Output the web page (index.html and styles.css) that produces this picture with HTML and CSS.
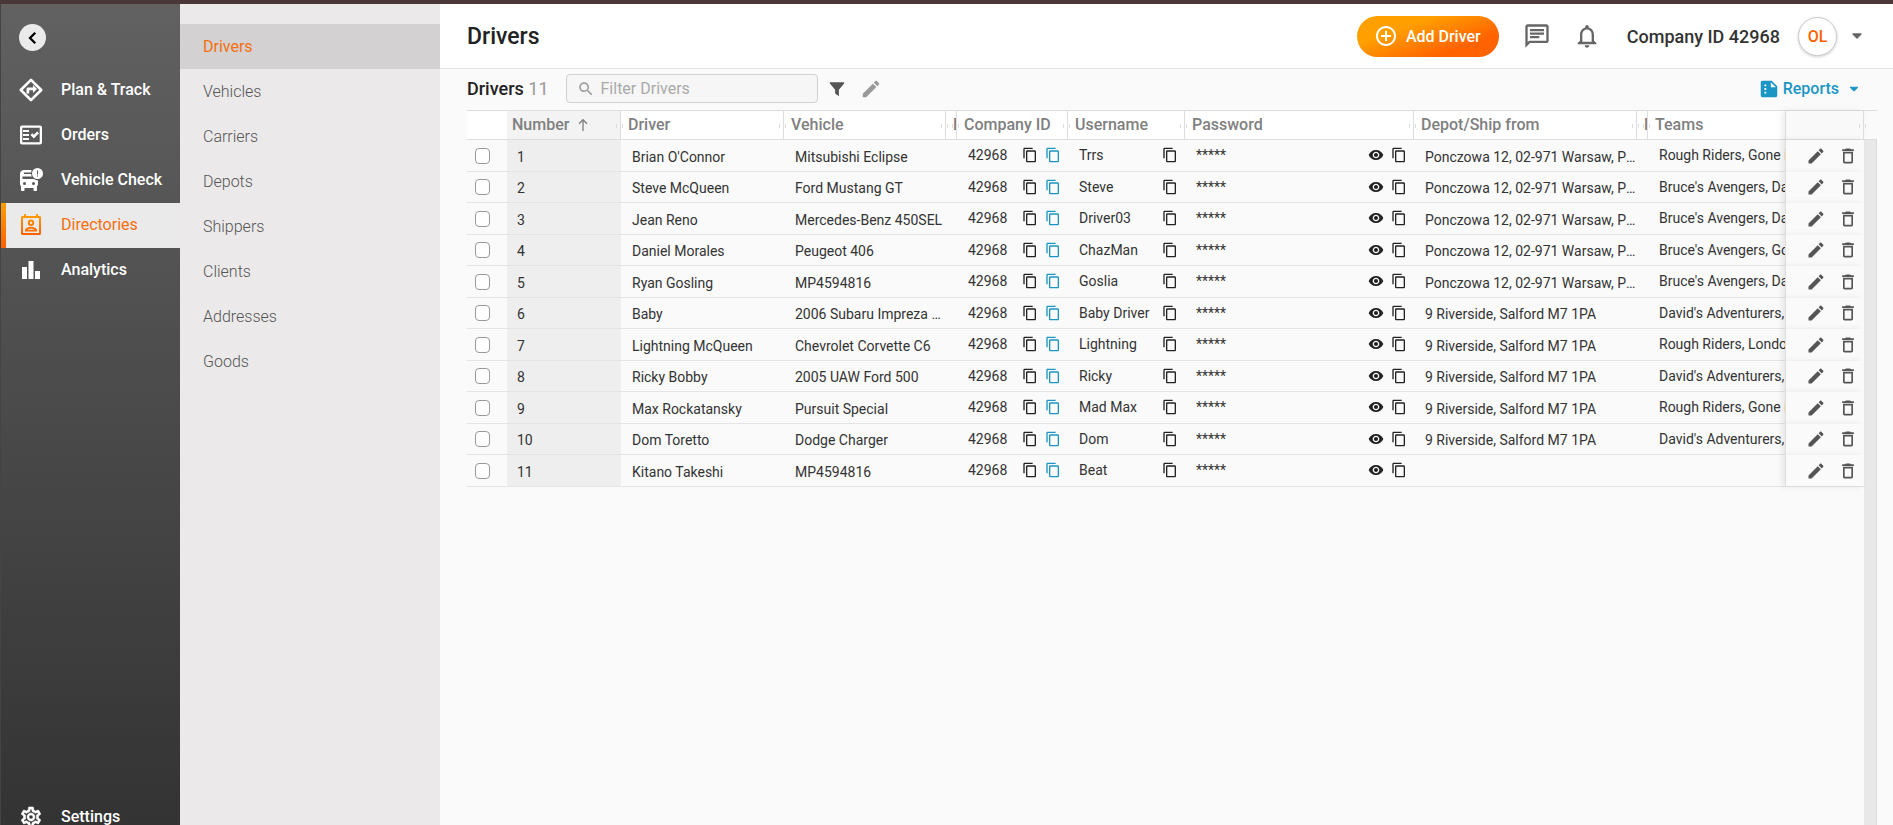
FILE: index.html
```html
<!DOCTYPE html>
<html lang="en">
<head>
    <meta charset="UTF-8">
    <meta name="viewport" content="width=device-width, initial-scale=1.0">
    <title>Drivers</title>
    <link rel="stylesheet" href="styles.css">
</head>
<body>
    <!-- Icon set -->
    <svg class="sprite" aria-hidden="true">
        <linearGradient id="orange" x1="0" y1="0" x2="0" y2="1">
            <stop offset="0" stop-color="#ffa000"/>
            <stop offset="1" stop-color="#ff5f00"/>
        </linearGradient>
        <symbol id="i-back" viewBox="0 0 24 24"><path d="M15 5l-7 7 7 7" fill="none" stroke="currentColor" stroke-width="3"/></symbol>
        <symbol id="i-plan" viewBox="0 0 24 24"><path d="M12 1.800L1.800 12 12 22.200 22.200 12z" fill="none" stroke="currentColor" stroke-width="2.6" stroke-linejoin="round"/><path d="M7.500 15.500V11c0-.8.700-1.500 1.500-1.500h5V7l4 4-4 4v-2.800h-3.800v3.300z"/></symbol>
        <symbol id="i-orders" viewBox="0 0 24 24"><path fill-rule="evenodd" d="M21 2.500H3C1.900 2.500 1 3.400 1 4.500v15c0 1.100.9 2 2 2h18c1.100 0 2-.9 2-2v-15c0-1.100-.9-2-2-2zm-.3 16.700H3.300V4.800h17.400v14.400z"/><path d="M20 10.200L18.200 8.400l-3.400 3.400-1.500-1.500-1.800 1.800 3.300 3.300zM4 7h6v2H4zM4 11h6v2H4zM4 15h6v2H4z"/></symbol>
        <symbol id="i-check" viewBox="0 0 24 24"><path fill-rule="evenodd" d="M12.500 2H5.500C2.500 2 1 3.500 1 6v10c0 1 .4 1.700 1 2.200V22c0 .6.4 1 1 1h1.500c.6 0 1-.4 1-1v-2h9v2c0 .6.4 1 1 1H17c.6 0 1-.4 1-1v-3.800c.6-.5 1-1.200 1-2.200v-3.600a6 6 0 0 1-4-1.400H3.500V8.500h9.300a6 6 0 0 1-.6-2.500H5V4.500h7.300c0-.9.100-1.700.200-2.500zM5.500 14a1.500 1.500 0 1 1 0 3 1.500 1.500 0 0 1 0-3zm9 0a1.500 1.500 0 1 1 0 3 1.500 1.500 0 0 1 0-3z"/><path fill-rule="evenodd" d="M18.500 0a5.500 5.500 0 1 1 0 11 5.500 5.500 0 0 1 0-11zM18 2.500v4h1v-4zm0 5v1h1v-1z"/></symbol>
        <symbol id="i-directories" viewBox="0 0 24 24"><path fill="url(#orange)" fill-rule="evenodd" d="M20.500 3H19V1h-2v2H7V1H5v2H3.500C2.700 3 2 3.700 2 4.500v16c0 .8.7 1.500 1.500 1.500h17c.8 0 1.500-.7 1.500-1.500v-16c0-.8-.7-1.500-1.500-1.500zM20 20H4V5h16v15zM12 6.500a3.200 3.200 0 1 1 0 6.400 3.200 3.200 0 0 1 0-6.400zm0 2a1.200 1.200 0 1 0 0 2.400 1.200 1.200 0 0 0 0-2.400zM6 18.500v-1.300c0-2.200 4-3.400 6-3.400s6 1.200 6 3.400v1.300H6zm2.600-1.800h6.800c-.8-.6-2.300-1-3.400-1s-2.600.4-3.400 1z"/></symbol>
        <symbol id="i-analytics" viewBox="0 0 24 24"><path d="M3 9h5v12H3zM9.500 3h5v18h-5zM16 13h5v8h-5z"/></symbol>
        <symbol id="i-settings" viewBox="0 0 24 24"><path stroke="currentColor" stroke-width=".6" fill-rule="evenodd" d="M19.430 12.980c.04-.32.07-.64.07-.98 0-.34-.03-.66-.07-.98l2.110-1.650c.19-.15.24-.42.12-.64l-2-3.460c-.09-.16-.26-.25-.44-.25-.06 0-.12.010-.17.030l-2.490 1c-.52-.4-1.080-.73-1.690-.98l-.38-2.650C14.460 2.180 14.250 2 14 2h-4c-.25 0-.46.18-.49.42l-.38 2.650c-.61.25-1.170.59-1.690.98l-2.490-1c-.06-.02-.12-.03-.18-.03-.17 0-.34.09-.43.25l-2 3.460c-.13.22-.07.49.12.64l2.110 1.650c-.04.32-.07.65-.07.98 0 .33.03.66.07.98l-2.110 1.650c-.19.15-.24.42-.12.64l2 3.460c.09.16.26.25.44.25.06 0 .12-.01.17-.03l2.490-1c.52.4 1.080.73 1.690.98l.38 2.650c.03.24.24.42.49.42h4c.25 0 .46-.18.49-.42l.38-2.650c.61-.25 1.170-.59 1.690-.98l2.490 1c.06.02.12.03.18.03.17 0 .34-.09.43-.25l2-3.460c.12-.22.07-.49-.12-.64l-2.110-1.650zm-1.980-1.710c.04.31.05.52.05.73 0 .21-.02.43-.05.73l-.14 1.130.89.7 1.080.84-.7 1.210-1.270-.51-1.040-.42-.9.68c-.43.32-.84.56-1.250.73l-1.060.43-.16 1.130-.2 1.350h-1.400l-.19-1.350-.16-1.130-1.060-.43c-.43-.18-.83-.41-1.230-.71l-.91-.7-1.060.43-1.270.51-.7-1.210 1.080-.84.89-.7-.14-1.130c-.03-.31-.05-.54-.05-.74s.02-.43.05-.73l.14-1.130-.89-.7-1.080-.84.7-1.210 1.270.51 1.040.42.9-.68c.43-.32.84-.56 1.250-.73l1.060-.43.16-1.130.2-1.350h1.390l.19 1.350.16 1.130 1.060.43c.43.18.83.41 1.230.71l.91.7 1.060-.43 1.270-.51.7 1.210-1.070.85-.89.7.14 1.130zM12 8c-2.210 0-4 1.790-4 4s1.790 4 4 4 4-1.790 4-4-1.790-4-4-4zm0 6c-1.100 0-2-.9-2-2s.9-2 2-2 2 .9 2 2-.9 2-2 2z"/></symbol>
        <symbol id="i-add" viewBox="0 0 24 24"><path d="M13 7h-2v4H7v2h4v4h2v-4h4v-2h-4V7zm-1-5C6.480 2 2 6.480 2 12s4.480 10 10 10 10-4.480 10-10S17.520 2 12 2zm0 18c-4.410 0-8-3.590-8-8s3.590-8 8-8 8 3.590 8 8-3.590 8-8 8z"/></symbol>
        <symbol id="i-chat" viewBox="0 0 24 24"><path d="M4 4h16v12H5.170L4 17.170V4m0-2c-1.100 0-1.990.9-1.990 2L2 22l4-4h14c1.100 0 2-.9 2-2V4c0-1.100-.9-2-2-2H4zm2 10h8v2H6v-2zm0-3h12v2H6V9zm0-3h12v2H6V6z"/></symbol>
        <symbol id="i-bell" viewBox="0 0 24 24"><path d="M12 22c1.100 0 2-.9 2-2h-4c0 1.100.9 2 2 2zm6-6v-5c0-3.070-1.630-5.640-4.500-6.320V4c0-.83-.67-1.500-1.500-1.500s-1.500.67-1.500 1.500v.68C7.640 5.360 6 7.920 6 11v5l-2 2v1h16v-1l-2-2zm-2 1H8v-6c0-2.480 1.510-4.500 4-4.500s4 2.020 4 4.500v6z"/></symbol>
        <symbol id="i-caret" viewBox="0 0 24 24"><path d="M6 9h12l-6 6z" stroke="currentColor" stroke-linejoin="round" stroke-width="2"/></symbol>
        <symbol id="i-search" viewBox="0 0 24 24"><path d="M15.500 14h-.79l-.28-.27C15.410 12.590 16 11.110 16 9.500 16 5.910 13.090 3 9.500 3S3 5.910 3 9.500 5.910 16 9.500 16c1.610 0 3.090-.59 4.230-1.570l.27.28v.79l5 4.990L20.490 19l-4.990-5zm-6 0C7.010 14 5 11.990 5 9.500S7.010 5 9.500 5 14 7.010 14 9.500 11.990 14 9.500 14z"/></symbol>
        <symbol id="i-filter" viewBox="0 0 24 24"><path d="M2.500 3h19v1.500L14.500 13v8.500L9.500 18v-5l-7-8.500z"/></symbol>
        <symbol id="i-edit" viewBox="0 0 24 24"><path d="M3 17.250V21h3.750L17.810 9.940l-3.750-3.750L3 17.250zM20.710 7.040c.39-.39.39-1.020 0-1.410l-2.340-2.340c-.39-.39-1.020-.39-1.410 0l-1.830 1.830 3.750 3.750 1.830-1.830z"/></symbol>
        <symbol id="i-report" viewBox="0 0 24 24"><path fill-rule="evenodd" d="M15 3H5c-1.100 0-2 .9-2 2v14c0 1.100.9 2 2 2h14c1.100 0 2-.9 2-2V9l-6-6zM7 7h2v2H7zM7 11h2v2H7zM7 15h2v2H7zM14 4.500l5.500 5.500H14z"/></symbol>
        <symbol id="i-sort" viewBox="0 0 24 24"><path d="M12 21V4M6 10l6-6 6 6" fill="none" stroke="currentColor" stroke-width="2"/></symbol>
        <symbol id="i-copy" viewBox="0 0 24 24"><path d="M16 1H4c-1.100 0-2 .9-2 2v14h2V3h12V1zm3 4H8c-1.100 0-2 .9-2 2v14c0 1.100.9 2 2 2h11c1.100 0 2-.9 2-2V7c0-1.100-.9-2-2-2zm0 16H8V7h11v14z"/></symbol>
        <symbol id="i-eye" viewBox="0 0 24 24"><path d="M12 4.500C7 4.500 2.730 7.610 1 12c1.730 4.390 6 7.500 11 7.500s9.270-3.110 11-7.500c-1.730-4.390-6-7.500-11-7.500zM12 17c-2.760 0-5-2.240-5-5s2.240-5 5-5 5 2.240 5 5-2.240 5-5 5zm0-8c-1.660 0-3 1.340-3 3s1.340 3 3 3 3-1.340 3-3-1.340-3-3-3z"/></symbol>
        <symbol id="i-delete" viewBox="0 0 24 24"><path fill-rule="evenodd" d="M6 19c0 1.100.9 2 2 2h8c1.100 0 2-.9 2-2V7H6v12zM8 9h8v10H8V9zm7.500-5l-1-1h-5l-1 1H5v2h14V4z"/></symbol>
    </svg>

    <div class="app">
        <!-- Main menu -->
        <nav class="sidebar">
            <button class="collapse" aria-label="Collapse menu"><svg><use href="#i-back"/></svg></button>
            <a class="nav-item" href="#"><svg><use href="#i-plan"/></svg>Plan &amp; Track</a>
            <a class="nav-item" href="#"><svg><use href="#i-orders"/></svg>Orders</a>
            <a class="nav-item" href="#"><svg><use href="#i-check"/></svg>Vehicle Check</a>
            <a class="nav-item active" href="#"><svg><use href="#i-directories"/></svg>Directories</a>
            <a class="nav-item" href="#"><svg><use href="#i-analytics"/></svg>Analytics</a>
            <a class="nav-item settings" href="#"><svg><use href="#i-settings"/></svg>Settings</a>
        </nav>

        <!-- Directories submenu -->
        <nav class="submenu">
            <a class="active" href="#">Drivers</a>
            <a href="#">Vehicles</a>
            <a href="#">Carriers</a>
            <a href="#">Depots</a>
            <a href="#">Shippers</a>
            <a href="#">Clients</a>
            <a href="#">Addresses</a>
            <a href="#">Goods</a>
        </nav>

        <main class="main">
            <header class="header">
                <h1>Drivers</h1>
                <button class="add-btn"><svg><use href="#i-add"/></svg>Add Driver</button>
                <button class="icon-btn chat" aria-label="Messages"><svg><use href="#i-chat"/></svg></button>
                <button class="icon-btn bell" aria-label="Notifications"><svg><use href="#i-bell"/></svg></button>
                <span class="company">Company ID 42968</span>
                <button class="avatar">OL</button>
                <button class="icon-btn caret" aria-label="Account menu"><svg><use href="#i-caret"/></svg></button>
            </header>

            <div class="toolbar">
                <h2>Drivers <span class="count">11</span></h2>
                <label class="search">
                    <svg><use href="#i-search"/></svg>
                    <input type="text" placeholder="Filter Drivers" aria-label="Filter Drivers">
                </label>
                <button class="icon-btn filter" aria-label="Filter"><svg><use href="#i-filter"/></svg></button>
                <button class="icon-btn edit" aria-label="Edit"><svg><use href="#i-edit"/></svg></button>
                <button class="reports"><svg><use href="#i-report"/></svg>Reports<svg class="caret"><use href="#i-caret"/></svg></button>
            </div>

            <div class="grid">
                <table>
                    <colgroup>
                        <col class="c-check"><col class="c-number"><col class="c-driver"><col class="c-vehicle">
                        <col class="c-slim"><col class="c-company"><col class="c-username"><col class="c-password">
                        <col class="c-depot"><col class="c-slim"><col class="c-teams"><col class="c-actions">
                    </colgroup>
                    <thead>
                        <tr>
                            <th></th>
                            <th class="number">Number<svg><use href="#i-sort"/></svg></th>
                            <th>Driver</th>
                            <th>Vehicle</th>
                            <th><div class="clip">D</div></th>
                            <th>Company ID</th>
                            <th>Username</th>
                            <th>Password</th>
                            <th>Depot/Ship from</th>
                            <th><div class="clip">D</div></th>
                            <th class="teams-head">Teams</th>
                            <th class="actions"></th>
                        </tr>
                    </thead>
                    <tbody id="rows"></tbody>
                </table>
                <div class="scroll"><div class="track"></div></div>
            </div>
        </main>
    </div>

    <script>
        const warsaw = 'Ponczowa 12, 02-971 Warsaw, Poland';
        const salford = '9 Riverside, Salford M7 1PA';

        // name, vehicle, username, depot, teams
        const drivers = [
            ["Brian O'Connor", 'Mitsubishi Eclipse', 'Trrs', warsaw, 'Rough Riders, Gone in 60'],
            ['Steve McQueen', 'Ford Mustang GT', 'Steve', warsaw, "Bruce's Avengers, David's"],
            ['Jean Reno', 'Mercedes-Benz 450SEL', 'Driver03', warsaw, "Bruce's Avengers, David's"],
            ['Daniel Morales', 'Peugeot 406', 'ChazMan', warsaw, "Bruce's Avengers, Gone"],
            ['Ryan Gosling', 'MP4594816', 'Goslia', warsaw, "Bruce's Avengers, David's"],
            ['Baby', '2006 Subaru Impreza WRX', 'Baby Driver', salford, "David's Adventurers, Gone"],
            ['Lightning McQueen', 'Chevrolet Corvette C6', 'Lightning', salford, 'Rough Riders, London'],
            ['Ricky Bobby', '2005 UAW Ford 500', 'Ricky', salford, "David's Adventurers, London"],
            ['Max Rockatansky', 'Pursuit Special', 'Mad Max', salford, 'Rough Riders, Gone in 60'],
            ['Dom Toretto', 'Dodge Charger', 'Dom', salford, "David's Adventurers, London"],
            ['Kitano Takeshi', 'MP4594816', 'Beat', '', '']
        ];

        const btn = (icon, label, cls = '') =>
            `<button class="cell-btn ${cls}" aria-label="${label}"><svg><use href="#i-${icon}"/></svg></button>`;

        document.getElementById('rows').innerHTML = drivers.map(([name, vehicle, user, depot, teams], i) => `
            <tr>
                <td class="check"><input type="checkbox" aria-label="Select ${name}"></td>
                <td class="number low">${i + 1}</td>
                <td class="low">${name}</td>
                <td class="low">${vehicle}</td>
                <td></td>
                <td class="tools"><div class="cell"><span>42968</span>${btn('copy', 'Copy company ID')}${btn('copy', 'Copy login', 'blue')}</div></td>
                <td class="tools"><div class="cell"><span>${user}</span>${btn('copy', 'Copy username')}</div></td>
                <td class="tools"><div class="cell"><span>*****</span>${btn('eye', 'Show password')}${btn('copy', 'Copy password')}</div></td>
                <td class="low depot" colspan="2">${depot}</td>
                <td class="teams">${teams}</td>
                <td class="actions"><div class="cell">${btn('edit', 'Edit driver')}${btn('delete', 'Delete driver')}</div></td>
            </tr>`).join('');
    </script>
</body>
</html>
```
FILE: styles.css
```css
* {
    box-sizing: border-box;
}

body {
    margin: 0;
    font-family: Roboto, sans-serif;
    font-size: 14px;
    color: #333;
    background: #fafafa;
    overflow: hidden;
}

svg {
    display: block;
    flex: none;
    fill: currentColor;
}

.sprite {
    position: absolute;
    width: 0;
    height: 0;
}

a {
    text-decoration: none;
}

button {
    font-family: inherit;
    border: none;
    background: none;
    padding: 0;
    cursor: pointer;
}

.app {
    display: flex;
    height: 100vh;
    border-top: 4px solid #4a3838;
}

/* Main menu */
.sidebar {
    flex: none;
    width: 180px;
    display: flex;
    flex-direction: column;
    background: linear-gradient(#606160, #333);
    border-left: 1px solid #444;
}

.collapse {
    flex: none;
    width: 27px;
    height: 27px;
    margin: 20px 18px 17px;
    border-radius: 50%;
    background: #ebeaea;
    color: #000;
    display: flex;
    align-items: center;
    justify-content: center;
}

.collapse svg {
    width: 18px;
    height: 18px;
}

.nav-item {
    flex: none;
    height: 45px;
    padding: 0 0 2px 18px;
    display: flex;
    align-items: center;
    gap: 18px;
    font-size: 16px;
    font-weight: 500;
    color: #fff;
}

.nav-item svg {
    width: 24px;
    height: 24px;
}

.nav-item.active {
    padding-left: 13px;
    border-left: 5px solid;
    border-image: linear-gradient(#ffa000, #ff5f00) 1;
    background: #ebeaea;
    color: #f36f0f;
    font-weight: 400;
}

.nav-item.settings {
    margin-top: auto;
    margin-bottom: -15px;
}

/* Submenu */
.submenu {
    flex: none;
    width: 260px;
    padding-top: 20px;
    background: #ebe9e9;
}

.submenu a {
    display: block;
    padding-left: 23px;
    font-size: 16px;
    font-weight: 300;
    line-height: 45px;
    color: #555;
}

.submenu a.active {
    background: #d3d1d1;
    color: #f36f0f;
    font-weight: 400;
}

/* Page header */
.main {
    flex: 1;
    min-width: 0;
    display: flex;
    flex-direction: column;
}

.header {
    flex: none;
    height: 65px;
    padding: 0 28px 0 27px;
    display: flex;
    align-items: center;
    background: #fff;
    border-bottom: 1px solid #e2e2e2;
}

h1 {
    margin: 0 auto 0 0;
    font-size: 23px;
    font-weight: 500;
    color: #222;
}

.add-btn {
    height: 41px;
    padding: 0 18px 0 17px;
    display: flex;
    align-items: center;
    gap: 8px;
    border-radius: 21px;
    background: linear-gradient(160deg, #ffa000 30%, #ff6200 75%);
    color: #fff;
    font-size: 16px;
    font-weight: 500;
}

.add-btn svg {
    width: 24px;
    height: 24px;
}

.icon-btn svg {
    width: 18px;
    height: 18px;
}

.header .icon-btn {
    color: #666;
}

.chat {
    margin-left: 24px;
}

.bell {
    margin: 0 26px 0 22px;
}

.chat svg,
.bell svg {
    width: 28px;
    height: 28px;
}

.company {
    font-size: 18px;
    font-weight: 500;
}

.avatar {
    width: 39px;
    height: 39px;
    margin: 0 12px 0 18px;
    border: 1px solid #ccc;
    border-radius: 50%;
    background: #fff;
    box-shadow: 0 1px 3px rgba(0, 0, 0, 0.2);
    color: #ff6200;
    font-size: 16px;
    font-weight: 500;
}

.header .caret svg {
    width: 16px;
    height: 16px;
}

/* Toolbar over the table */
.toolbar {
    flex: none;
    height: 41px;
    padding: 0 32px 2px 27px;
    display: flex;
    align-items: center;
}

h2 {
    margin: 0;
    font-size: 18px;
    font-weight: 500;
    color: #222;
}

.count {
    color: #999;
    font-weight: 400;
}

.search {
    width: 252px;
    height: 29px;
    margin: 0 10px 0 17px;
    padding-left: 10px;
    display: flex;
    align-items: center;
    gap: 6px;
    border: 1px solid #d0d0d0;
    border-radius: 4px;
    background: #f6f6f6;
    color: #999;
}

.search svg {
    width: 18px;
    height: 18px;
}

.search input {
    min-width: 0;
    flex: 1;
    border: none;
    outline: none;
    padding: 0;
    background: none;
    font: 400 16px Roboto, sans-serif;
}

.search input::placeholder {
    color: #aaa;
}

.filter {
    color: #555;
}

.edit {
    margin-left: 14px;
    color: #999;
}

.edit svg {
    width: 22px;
    height: 22px;
}

.reports {
    margin-left: auto;
    display: flex;
    align-items: center;
    gap: 3px;
    color: #1b96c4;
    font-size: 16px;
    font-weight: 500;
}

.reports svg {
    width: 22px;
    height: 22px;
}

.reports svg.caret {
    width: 14px;
    height: 14px;
    margin-left: 5px;
}

/* Table */
.grid {
    flex: 1;
    min-height: 0;
    display: flex;
    align-items: flex-start;
    margin: 0 16px 0 27px;
    border-top: 1px solid #ddd;
}

table {
    flex: 1;
    width: 100%;
    min-width: 0;
    table-layout: fixed;
    border-collapse: separate;
    border-spacing: 0;
}

.c-check { width: 40px; }
.c-number { width: 114px; }
.c-driver { width: 163px; }
.c-vehicle { width: 162px; }
.c-slim { width: 11px; }
.c-company { width: 111px; }
.c-username { width: 117px; }
.c-password { width: 229px; }
.c-depot { width: 223px; }
.c-actions { width: 79px; }

th {
    position: relative;
    height: 29px;
    padding: 0 0 1px 7px;
    background: #fff;
    border-right: 1px solid #ddd;
    border-bottom: 1px solid #ddd;
    font-size: 16px;
    font-weight: 500;
    line-height: 22px;
    text-align: left;
    white-space: nowrap;
    color: #808080;
}

th:first-child,
th.teams-head {
    border-right: none;
}

/* Column resize handle */
th:not(:first-child):not(.teams-head)::after {
    content: "";
    position: absolute;
    z-index: 1;
    right: -3px;
    top: 13px;
    width: 5px;
    height: 4px;
    border: solid #ddd;
    border-width: 0 1px;
}

th.number {
    padding-left: 5px;
    background: #f3f3f3;
}

th.number svg {
    display: inline-block;
    width: 16px;
    height: 16px;
    margin-left: 6px;
    vertical-align: -3px;
}

.clip {
    width: 3px;
    height: 22px;
    overflow: hidden;
}

th.actions {
    background: #f9f9f9;
}

td {
    height: 31px;
    padding: 0 2px 1px 11px;
    border-bottom: 1px solid #e4e4e4;
    line-height: 20px;
    white-space: nowrap;
    overflow: hidden;
    text-overflow: ellipsis;
}

tr:nth-child(odd) td {
    height: 32px;
}

td.low {
    padding-top: 2px;
    padding-bottom: 0;
}

td.number {
    padding-left: 10px;
    background: #eee;
}

td.depot {
    padding-right: 6px;
}

td.check {
    padding: 0 0 0 8px;
}

td.check input {
    appearance: none;
    display: block;
    width: 15px;
    height: 16px;
    margin: 0;
    border: 1px solid #999;
    border-radius: 4px;
    background: #fff;
}

td.tools {
    padding-right: 7px;
}

td.teams {
    padding-right: 0;
    text-overflow: clip;
}

.cell {
    display: flex;
    align-items: center;
    gap: 7px;
}

.cell span {
    margin-right: auto;
}

.cell-btn {
    color: #222;
}

.cell-btn svg {
    width: 16px;
    height: 16px;
}

.cell-btn.blue {
    color: #1b96c4;
}

.actions {
    position: relative;
    border-left: 1px solid #ddd;
    box-shadow: -3px 0 6px rgba(0, 0, 0, 0.08);
    overflow: visible;
}

td.actions {
    padding: 0 6px 0 20px;
    background: #fafafa;
    border-bottom-color: transparent;
}

tr:last-child td.actions {
    border-bottom-color: #ddd;
}

.actions .cell {
    gap: 12px;
}

.actions .cell-btn {
    color: #555;
}

.actions .cell-btn svg {
    width: 20px;
    height: 20px;
}

.scroll {
    flex: none;
    width: 13px;
    align-self: stretch;
    display: flex;
    flex-direction: column;
}

.track {
    flex: 1;
    margin-top: 28px;
    background: #e8e8e8;
    border-top: 1px solid #ddd;
    border-right: 1px solid #ddd;
}
```
